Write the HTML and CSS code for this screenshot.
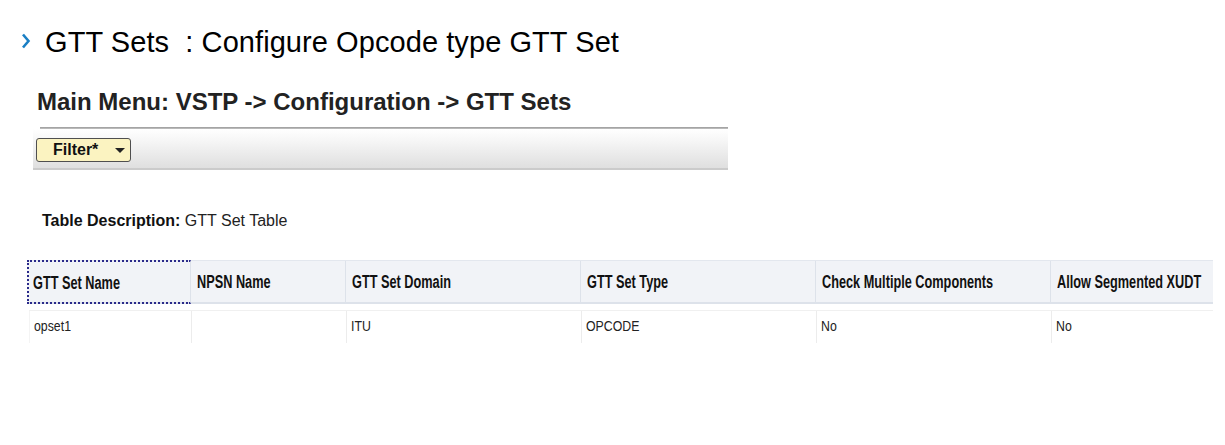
FILE: index.html
```html
<!DOCTYPE html>
<html>
<head>
<meta charset="utf-8">
<link rel="stylesheet" href="styles.css">
</head>
<body>
<div class="page">
  <h1 class="title">
    <svg class="chev" width="10" height="16" viewBox="0 0 10 16"><path d="M2 1.5 L7.5 8 L2 14.5" fill="none" stroke="#1a7fc4" stroke-width="2.6"/></svg>
    <span class="title-text">GTT Sets&nbsp; : Configure Opcode type GTT Set</span>
  </h1>
  <div class="panel">
    <h2 class="menu">Main Menu: VSTP -&gt; Configuration -&gt; GTT Sets</h2>
    <div class="rule"></div>
    <div class="toolbar">
      <button class="filter"><span class="ftext">Filter*</span><span class="caret"></span></button>
    </div>
  </div>
  <p class="desc"><b>Table Description:</b> GTT Set Table</p>
  <div class="table">
    <div class="row head">
      <div class="cell c1 focus"><span class="sq">GTT Set Name</span></div>
      <div class="cell c2"><span class="sq">NPSN Name</span></div>
      <div class="cell c3"><span class="sq">GTT Set Domain</span></div>
      <div class="cell c3"><span class="sq">GTT Set Type</span></div>
      <div class="cell c3"><span class="sq">Check Multiple Components</span></div>
      <div class="cell c6"><span class="sq">Allow Segmented XUDT</span></div>
    </div>
    <div class="row data">
      <div class="cell c1"><span class="sq">opset1</span></div>
      <div class="cell c2"></div>
      <div class="cell c3"><span class="sq">ITU</span></div>
      <div class="cell c3"><span class="sq">OPCODE</span></div>
      <div class="cell c3"><span class="sq">No</span></div>
      <div class="cell c6"><span class="sq">No</span></div>
    </div>
  </div>
</div>
</body>
</html>
```
FILE: styles.css
```css
html, body {
  margin: 0;
  padding: 0;
  background: #ffffff;
}
body {
  font-family: "Liberation Sans", Arial, sans-serif;
  color: #000;
  width: 1225px;
  height: 445px;
  overflow: hidden;
}
.page {
  padding: 26px 0 0 0;
}
.sq {
  display: inline-block;
  transform: scaleX(0.86);
  transform-origin: left center;
  white-space: nowrap;
}
.title {
  margin: 0;
  display: flex;
  align-items: center;
  font-weight: normal;
  font-size: 29px;
  line-height: 32px;
  padding-left: 21px;
  height: 32px;
}
.chev {
  margin-right: 14px;
  margin-top: -3px;
}
.title-text {
  white-space: pre;
  letter-spacing: 0.07px;
}
.panel {
  margin-left: 33px;
  width: 695px;
  margin-top: 31px;
}
.menu {
  margin: 0 0 0 4px;
  font-size: 24px;
  line-height: 26px;
  font-weight: bold;
  color: #222;
  height: 26px;
  white-space: nowrap;
}
.rule {
  margin: 12px 0 0 7px;
  height: 2px;
  background: linear-gradient(#9a9a9a, #c4c4c4);
}
.toolbar {
  background: linear-gradient(#ffffff, #f6f6f6 30%, #dfdfdf);
  border-bottom: 2px solid #cbcbcb;
  display: flex;
  align-items: flex-start;
  padding: 9px 0 0 3px;
  box-sizing: border-box;
  height: 41px;
}
.filter {
  display: flex;
  align-items: center;
  width: 95px;
  height: 24px;
  padding: 0 0 0 16px;
  background: #fbf3c1;
  border: 1px solid #4f4f4f;
  border-radius: 3px;
  font-family: "Liberation Sans", Arial, sans-serif;
  font-weight: bold;
  font-size: 16px;
  color: #111;
  box-sizing: border-box;
}
.ftext {
  width: 62px;
  text-align: left;
}
.caret {
  width: 0;
  height: 0;
  border-left: 5px solid transparent;
  border-right: 5px solid transparent;
  border-top: 5px solid #222;
}
.desc {
  margin: 42px 0 0 42px;
  font-size: 16px;
  line-height: 18px;
  color: #222;
}
.desc b {
  color: #111;
}
.table {
  margin: 30px 0 0 27px;
  width: 1186px;
}
.row {
  display: flex;
}
.head {
  height: 44px;
  background: #f1f3f7;
  border-top: 1px solid #e3e7ee;
  border-bottom: 2px solid #dde2ea;
  box-sizing: border-box;
}
.head .cell {
  font-weight: bold;
  font-size: 18px;
  color: #111;
  border-right: 1px solid #dde2ea;
  padding-left: 6px;
  display: flex;
  align-items: center;
  box-sizing: border-box;
  padding-top: 2px;
}
.head .cell:last-child {
  border-right: none;
}
.head .cell.focus {
  border: 2px dotted #2a2a8a;
  border-right: 1px solid #dde2ea;
  margin-top: -1px;
  margin-bottom: -2px;
  padding-left: 4px;
}
.head .sq {
  transform: scaleX(0.707);
}
.c1 { width: 164px; }
.c2 { width: 155px; }
.c3 { width: 235px; }
.c6 { width: 162px; }
.data {
  margin-top: 6px;
  margin-left: 2px;
  height: 33px;
  border-top: 1px solid #f0f0f0;
  box-sizing: border-box;
}
.data .cell {
  font-size: 14px;
  color: #222;
  padding-left: 4px;
  display: flex;
  align-items: center;
  border-left: 1px solid #ececec;
  box-sizing: border-box;
  padding-bottom: 2px;
}
.data .cell:first-child {
  width: 162px;
  border-left: 1px solid #f4f4f4;
}
.data .sq {
  transform: scaleX(0.88);
}
```
